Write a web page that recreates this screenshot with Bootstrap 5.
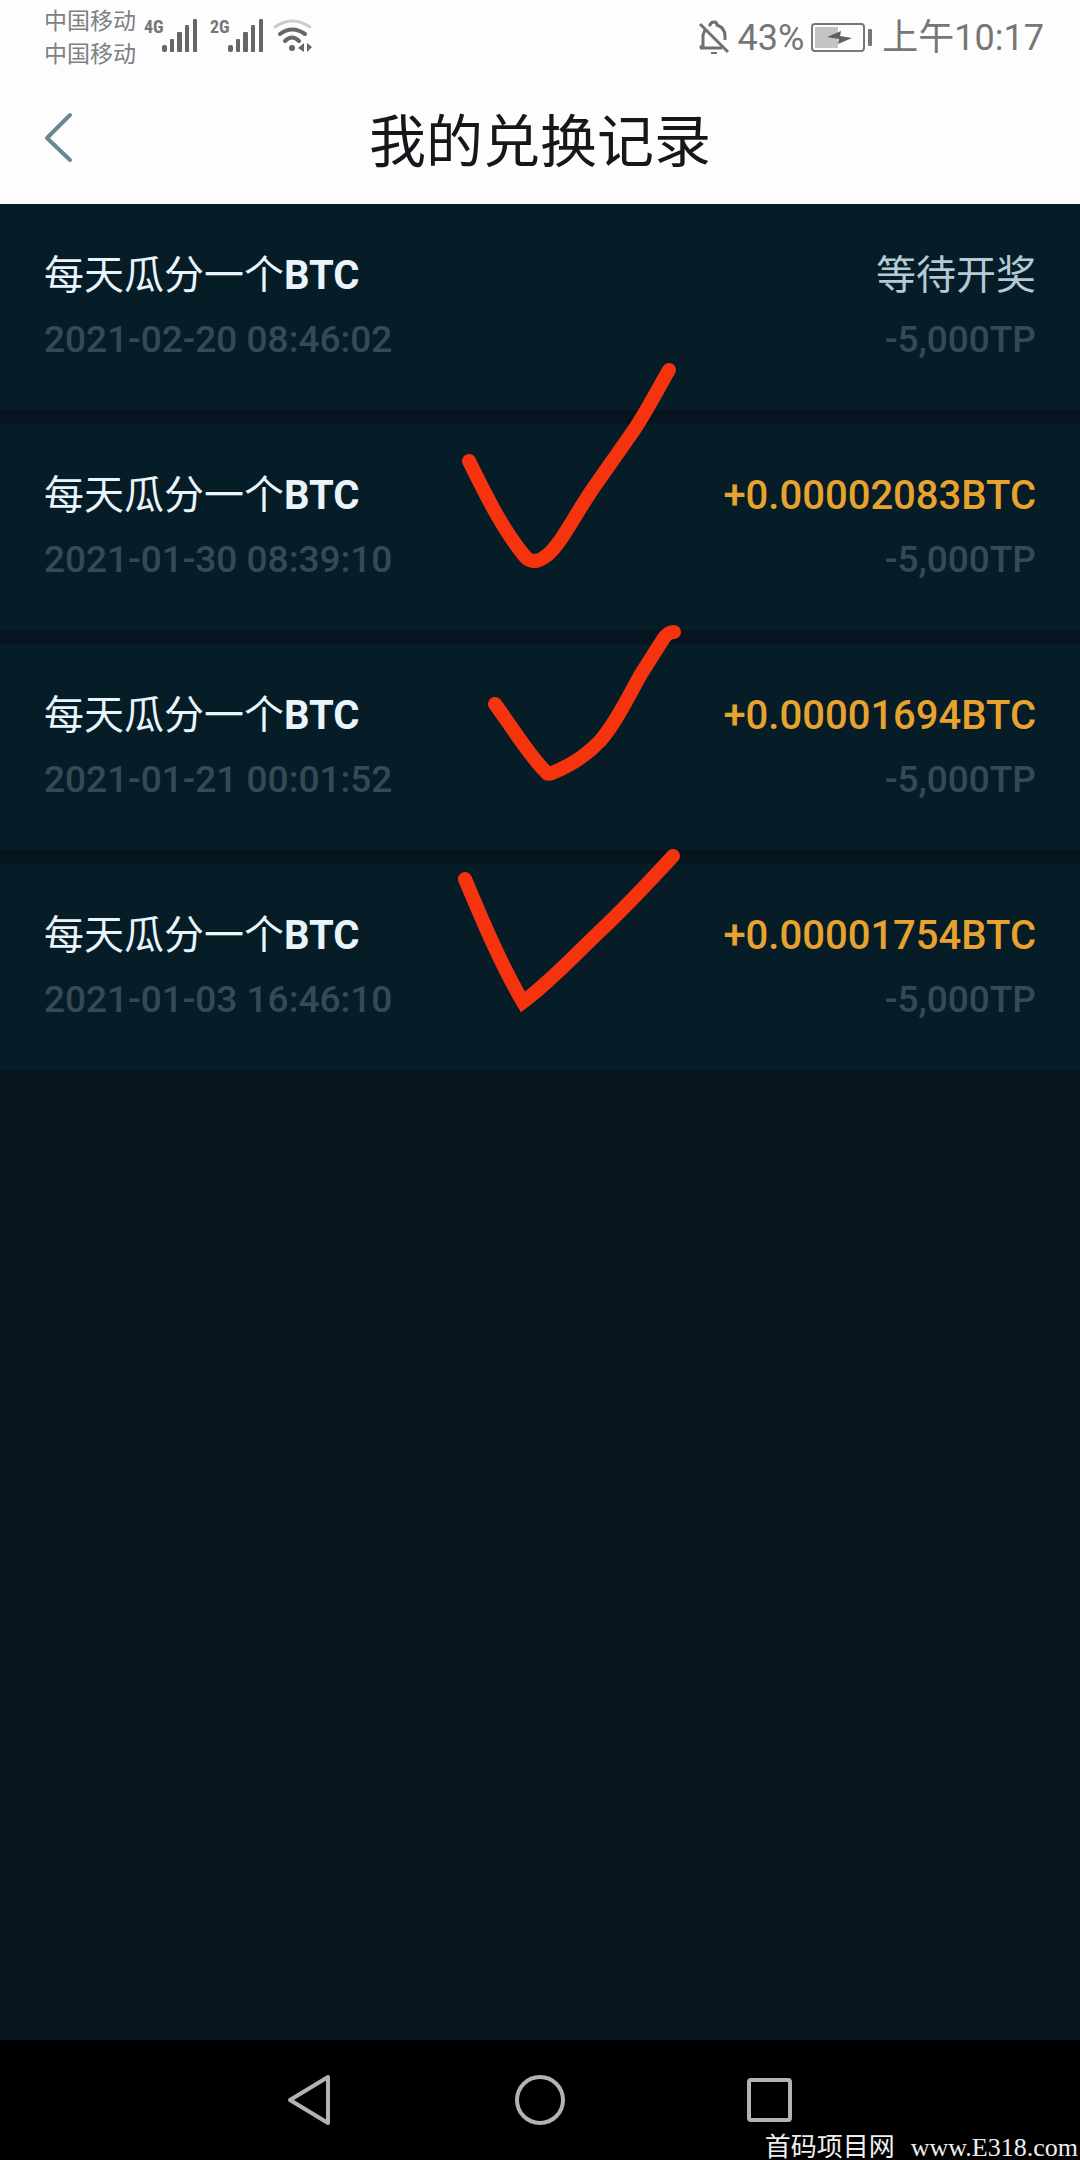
<!DOCTYPE html>
<html lang="zh-CN">
<head>
<meta charset="utf-8">
<meta name="viewport" content="width=device-width, initial-scale=1">
<title>我的兑换记录</title>
<link href="https://cdn.jsdelivr.net/npm/bootstrap@5.3.0/dist/css/bootstrap.min.css" rel="stylesheet">
<style>
  body { background: #05141f; font-family: Roboto, "Noto Sans CJK SC", sans-serif; }
  .app-top { background: #fdfdfe; }
  .status-bar { height: 74px; padding: 0 36px 0 44px; color: #767676; }
  .carriers { font-size: 23px; line-height: 33px; width: 100px; color: #808080; padding-top: 2px; }
  .net-label { font-family: "Roboto Condensed", "Liberation Sans Narrow", Roboto, sans-serif; font-size: 18px; line-height: 18px; font-weight: 700; width: 18px; padding-top: 18px; }
  .net-second { margin-left: 12px; }
  .status-text { font-size: 36px; line-height: 48px; padding-top: 2px; }
  .battery { margin: 0 10px 0 6px; }
  .title-bar { height: 130px; padding: 0 44px; }
  .title-bar h1 { font-size: 57px; line-height: 72px; padding-top: 8px; color: #15181b; font-weight: 400; }
  .side { width: 80px; }
  .records { gap: 14px; }
  .record { background: #061d28; padding: 44px 44px 46px; }
  .record-line { height: 56px; line-height: 56px; font-size: 40px; font-weight: 500; }
  .record-meta { height: 48px; line-height: 48px; font-size: 37px; font-weight: 500; color: #364a56; margin-top: 12px; }
  .name { color: #e9f5fb; font-weight: 400; }
  .pending { color: #b4cad6; font-weight: 400; }
  .gain { color: #e8a22e; }
  .ink { top: 0; pointer-events: none; }
  .system-nav { background: #000; height: 120px; }
  .system-nav .btn { width: 230px; }
  .stamp { right: 2px; bottom: 0; gap: 16px; font: 26px/24px "Liberation Serif", "Noto Sans CJK SC", serif; color: #eee; }
</style>
</head>
<body class="d-flex flex-column min-vh-100">
<header class="app-top">
  <div class="status-bar d-flex justify-content-between align-items-center">
    <div class="d-flex align-items-center">
      <div class="carriers"><div>中国移动</div><div>中国移动</div></div>
      <div class="d-flex align-items-start h-100">
        <span class="net-label">4G</span>
        <svg width="36" height="74" fill="#666" aria-hidden="true"><rect x="0" y="45" width="5" height="7" rx="2"/><rect x="8" y="39" width="4" height="13" rx="1"/><rect x="15" y="32" width="5" height="20" rx="1"/><rect x="23" y="25" width="4" height="27" rx="1"/><rect x="31" y="19" width="4" height="33" rx="1"/></svg>
        <span class="net-label net-second">2G</span>
        <svg width="36" height="74" fill="#666" aria-hidden="true"><rect x="0" y="45" width="5" height="7" rx="2"/><rect x="8" y="39" width="4" height="13" rx="1"/><rect x="15" y="32" width="5" height="20" rx="1"/><rect x="23" y="25" width="4" height="27" rx="1"/><rect x="31" y="19" width="4" height="33" rx="1"/></svg>
        <svg class="ms-2" width="42" height="74" fill="none" stroke-linecap="round" aria-hidden="true"><path d="M3 27Q20 15 38 27" stroke="#ccc" stroke-width="3"/><path d="M8 34Q20 25 33 34M13 41Q20 34 27 41" stroke="#666" stroke-width="4"/><circle cx="20" cy="48" r="3" fill="#666"/><path d="M32 43V52L26 48ZM35 43V52L40 47Z" fill="#666"/></svg>
      </div>
    </div>
    <div class="d-flex align-items-center status-text">
      <svg class="me-2" width="32" height="36" fill="none" stroke="#707070" stroke-width="3" aria-hidden="true"><path d="M5 28V15L7 10M2 28H24M5 25L2 28M12 5Q13 2 16 2Q19 2 19 5Q27 8 27 16V20M11 6L13 4"/><path d="M2 4L30 32"/><path d="M13 33H19" stroke-width="2"/></svg>
      <span>43%</span>
      <svg class="battery" width="62" height="32" aria-hidden="true"><rect x="2" y="2" width="52" height="27" rx="3" fill="none" stroke="#777" stroke-width="2"/><rect x="5" y="5" width="23" height="21" fill="#c4c4c4"/><path d="M17 15L31 9L30 14L42 16L28 22L29 17Z" fill="#606060"/><rect x="58" y="7" width="4" height="17" rx="1" fill="#777"/></svg>
      <span>上午10:17</span>
    </div>
  </div>
  <div class="title-bar d-flex align-items-center justify-content-between">
    <div class="side"><button type="button" class="btn p-0 border-0 d-flex" aria-label="返回"><svg width="30" height="54" fill="none" stroke="#6b8791" stroke-width="4" stroke-linecap="round" stroke-linejoin="round"><path d="M26 3L3 26L26 48"/></svg></button></div>
    <h1 class="m-0">我的兑换记录</h1>
    <div class="side"></div>
  </div>
</header>
<main class="flex-grow-1 position-relative">
  <ul class="records list-unstyled d-flex flex-column m-0">
    <li class="record">
      <div class="record-line d-flex justify-content-between"><span class="name">每天瓜分一个<b>BTC</b></span><span class="pending">等待开奖</span></div>
      <div class="record-meta d-flex justify-content-between"><time>2021-02-20 08:46:02</time><span>-5,000TP</span></div>
    </li>
    <li class="record">
      <div class="record-line d-flex justify-content-between"><span class="name">每天瓜分一个<b>BTC</b></span><span class="gain">+0.00002083BTC</span></div>
      <div class="record-meta d-flex justify-content-between"><time>2021-01-30 08:39:10</time><span>-5,000TP</span></div>
    </li>
    <li class="record">
      <div class="record-line d-flex justify-content-between"><span class="name">每天瓜分一个<b>BTC</b></span><span class="gain">+0.00001694BTC</span></div>
      <div class="record-meta d-flex justify-content-between"><time>2021-01-21 00:01:52</time><span>-5,000TP</span></div>
    </li>
    <li class="record">
      <div class="record-line d-flex justify-content-between"><span class="name">每天瓜分一个<b>BTC</b></span><span class="gain">+0.00001754BTC</span></div>
      <div class="record-meta d-flex justify-content-between"><time>2021-01-03 16:46:10</time><span>-5,000TP</span></div>
    </li>
  </ul>
  <!-- hand-drawn ticks over the three paid records -->
  <svg class="ink position-absolute start-50 translate-middle-x" width="300" height="866" viewBox="390 204 300 866" fill="none" stroke="#f5330f" stroke-width="14" stroke-linecap="round" aria-hidden="true">
    <path d="M469 461C484 491 501 527 523 554Q532 567 546 556C560 546 574 516 594 487L634 430C648 409 660 385 669 370"/>
    <path d="M495 704C512 727 530 757 546 772Q548 775 552 773C567 767 586 756 600 741C616 723 628 697 641 674L662 641Q667 632 674 632" stroke-linejoin="round"/>
    <path d="M465 879C481 917 500 963 523 1002C550 982 573 957 599 932C627 906 650 881 673 856" stroke-linejoin="miter"/>
  </svg>
</main>
<nav class="system-nav position-relative d-flex justify-content-center align-items-center">
  <button type="button" class="btn p-0 border-0" aria-label="返回"><svg width="46" height="54" fill="none" stroke="#b3b3b3" stroke-width="4" stroke-linejoin="round"><path d="M41 4V50L3 27Z"/></svg></button>
  <button type="button" class="btn p-0 border-0" aria-label="主屏幕"><svg width="54" height="54" fill="none" stroke="#b3b3b3" stroke-width="4"><circle cx="27" cy="27" r="23"/></svg></button>
  <button type="button" class="btn p-0 border-0" aria-label="最近任务"><svg width="54" height="54" fill="none" stroke="#b3b3b3" stroke-width="4"><rect x="6" y="7" width="41" height="40" rx="2"/></svg></button>
  <div class="stamp position-absolute d-flex"><span>首码项目网</span><span>www.E318.com</span></div>
</nav>
<script src="https://cdn.jsdelivr.net/npm/bootstrap@5.3.0/dist/js/bootstrap.bundle.min.js"></script>
</body>
</html>
